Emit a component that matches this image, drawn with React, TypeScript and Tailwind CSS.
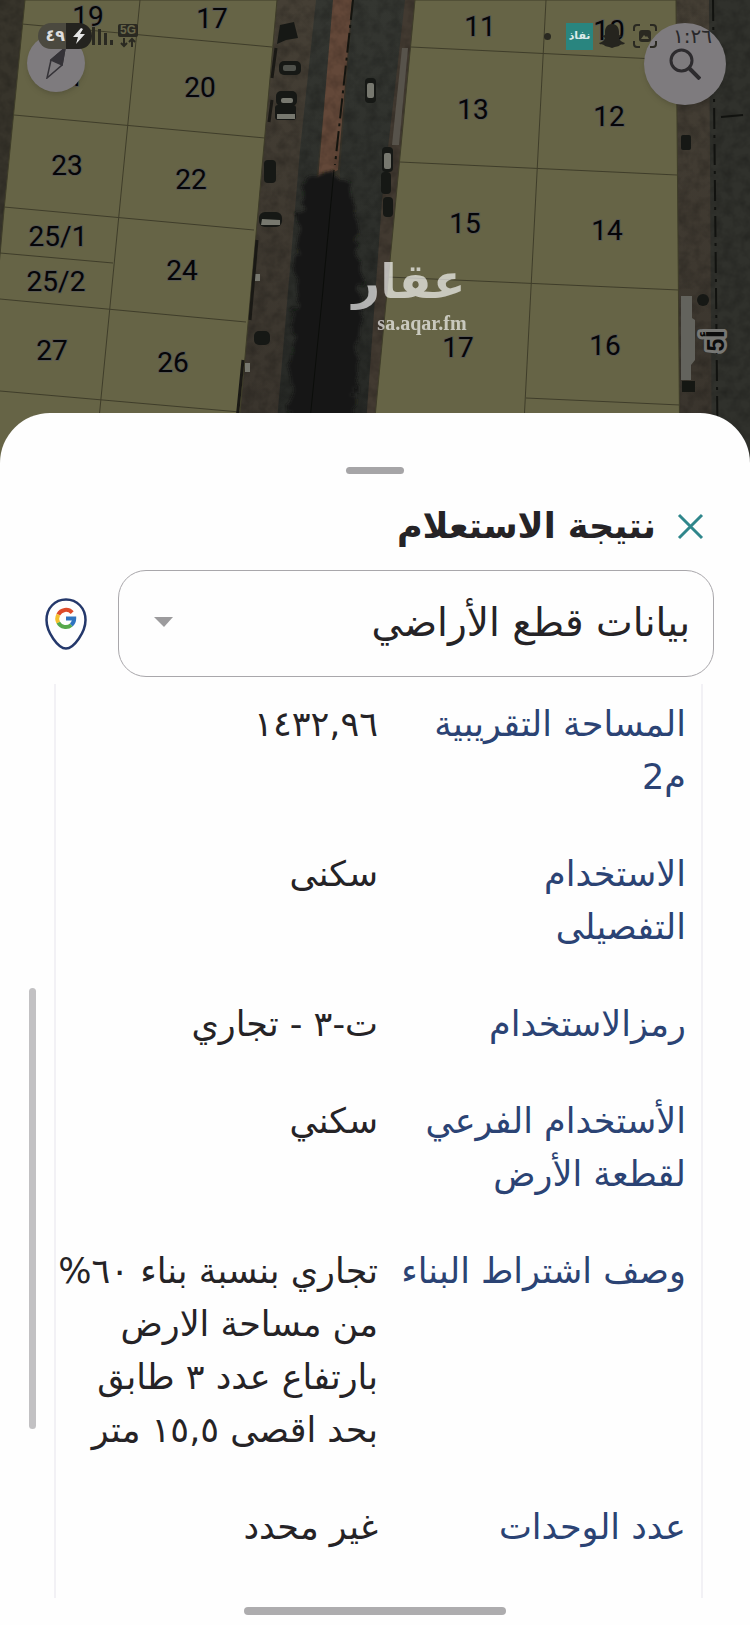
import React, { useState } from 'react'

interface PlotLabel {
  text: string
  x: number
  y: number
}

interface DetailRow {
  label: string
  value: string
}

const plotLabels: PlotLabel[] = [
  { text: '19', x: 88, y: 26 },
  { text: '17', x: 212, y: 28 },
  { text: '21', x: 68, y: 86 },
  { text: '20', x: 200, y: 97 },
  { text: '23', x: 67, y: 175 },
  { text: '22', x: 191, y: 189 },
  { text: '25/1', x: 58, y: 246 },
  { text: '25/2', x: 56, y: 291 },
  { text: '24', x: 182, y: 280 },
  { text: '27', x: 52, y: 360 },
  { text: '26', x: 173, y: 372 },
  { text: '11', x: 480, y: 36 },
  { text: '10', x: 609, y: 40 },
  { text: '13', x: 473, y: 119 },
  { text: '12', x: 609, y: 126 },
  { text: '15', x: 465, y: 233 },
  { text: '14', x: 607, y: 240 },
  { text: '17', x: 458, y: 357 },
  { text: '16', x: 605, y: 355 }
]

const details: DetailRow[] = [
  { label: 'المساحة التقريبية\nم2', value: '١٤٣٢,٩٦' },
  { label: 'الاستخدام\nالتفصيلى', value: 'سكنى' },
  { label: 'رمزالاستخدام', value: 'ت-٣ - تجاري' },
  { label: 'الأستخدام الفرعي\nلقطعة الأرض', value: 'سكني' },
  { label: 'وصف اشتراط البناء', value: 'تجاري بنسبة بناء ٦٠%\nمن مساحة الارض\nبارتفاع عدد ٣ طابق\nبحد اقصى ١٥,٥ متر' },
  { label: 'عدد الوحدات', value: 'غير محدد' }
]

const MapView: React.FC = () => (
  <svg
    className="block h-[480px] w-full bg-[#2c2c28]"
    viewBox="0 0 750 480"
    preserveAspectRatio="xMidYMin slice"
    direction="ltr"
    aria-label="خريطة قطع الأراضي"
  >
    <defs>
      <linearGradient id="street" x1="0" y1="0" x2="0" y2="1">
        <stop offset="0" stopColor="#343631" />
        <stop offset="1" stopColor="#252724" />
      </linearGradient>
      <linearGradient id="verge" x1="0" y1="0" x2="0" y2="1">
        <stop offset="0" stopColor="#453f35" />
        <stop offset="1" stopColor="#38332c" />
      </linearGradient>
      <filter id="ground" x="0" y="0" width="100%" height="100%">
        <feTurbulence type="fractalNoise" baseFrequency="0.09" numOctaves="3" seed="4" />
        <feColorMatrix values="0 0 0 0 0  0 0 0 0 0  0 0 0 0 0  1.4 0 0 0 -0.5" />
      </filter>
      <filter id="leaves" x="-10%" y="-5%" width="120%" height="110%">
        <feTurbulence type="fractalNoise" baseFrequency="0.08" numOctaves="3" seed="9" result="n" />
        <feDisplacementMap in="SourceGraphic" in2="n" scale="16" xChannelSelector="R" yChannelSelector="G" />
        <feGaussianBlur stdDeviation="1.500" />
      </filter>
    </defs>

    {/* Ground and streets */}
    <rect width="750" height="480" fill="#37342b" />
    <path d="M277 0H324L288 480H234Z" fill="url(#verge)" />
    <path d="M316 0H336L316 180L292 480H272L300 150Z" fill="url(#street)" />
    <path d="M333 0H352L338 170L318 180Z" fill="#634839" />
    <path d="M353 0H410L370 480H334L340 170Z" fill="url(#street)" />
    <path d="M405 0H416L374 480H362L382 200Z" fill="#423a31" />
    <path d="M676 0H712V480H680Z" fill="url(#verge)" />
    <path d="M709 0H750V480H712Z" fill="#30312c" />
    <rect width="750" height="480" filter="url(#ground)" opacity="0.28" />
    <path
      d="M308 178L330 172L350 184L356 215L362 300L356 360L354 480H284L296 300L299 215Z"
      fill="#131712"
      filter="url(#leaves)"
    />
    <path d="M353 0L335 165" stroke="#14140f" strokeWidth="2" strokeDasharray="20 5 3 5" fill="none" />
    <path d="M334 170L322 300L310 420" stroke="#0b0d0a" strokeWidth="1" fill="none" />

    {/* Cars along the street */}
    <g fill="#161815">
      <path d="M280 25L294 22L298 38L286 40L277 44Z" />
      <rect x="279" y="61" width="22" height="14" rx="5" />
      <rect x="276" y="91" width="21" height="15" rx="5" />
      <rect x="275" y="105" width="21" height="15" rx="3" />
      <rect x="264" y="160" width="12" height="23" rx="4" />
      <rect x="259" y="212" width="23" height="15" rx="6" />
      <rect x="254" y="331" width="16" height="14" rx="5" />
      <rect x="365" y="78" width="11" height="25" rx="4" />
      <rect x="382" y="147" width="11" height="25" rx="4" />
      <rect x="381" y="172" width="10" height="22" rx="4" />
      <rect x="383" y="197" width="10" height="20" rx="4" />
      <rect x="681" y="135" width="10" height="15" rx="2" />
      <circle cx="703" cy="300" r="6" />
    </g>
    <g fill="#77786f">
      <rect x="283" y="65" width="13" height="6" rx="2" opacity="0.6" />
      <rect x="281" y="98" width="12" height="5" rx="2" />
      <path d="M277 114H295V119H277ZM262 219L280 220V225H261Z" />
      <rect x="367" y="83" width="7" height="15" rx="2" />
      <rect x="384" y="153" width="7" height="16" rx="2" />
      <rect x="253" y="274" width="7" height="7" />
      <rect x="245" y="363" width="5" height="9" />
    </g>
    <path d="M402 48H408L399 145H392Z" fill="#57534b" />
    <path d="M681 296H692V318L695 320V360L691 365V380H681Z" fill="#63635d" />
    <rect x="682" y="381" width="13" height="11" fill="#151713" />

    {/* Plots */}
    <g fill="#666446" stroke="#3e3c29" strokeWidth="1">
      <path d="M25 0H277L234 480H-20L4 210Z" />
      <path d="M415 0H676L680 480H369Z" />
    </g>
    <g fill="none" stroke="#3f3d2a" strokeWidth="1">
      <path d="M140 0L93 480M22 24L272 47M14 115L265 138M4 207L254 230M0 253L113 263M0 299L246 322M0 391L240 412" />
      <path d="M546 0L521 480M411 47L676 60M400 162L677 175M388 277L679 290M526 398L680 405" />
    </g>
    <path d="M276 48L272 78M272 100L269 122M257 240L250 320M243 360L237 420" stroke="#1a1915" strokeWidth="3" />
    <path d="M713 0L718 480" stroke="#11120f" strokeWidth="2" strokeDasharray="21 6 3 6" />
    <path d="M721 117L743 115" stroke="#11120f" strokeWidth="2" />

    {/* Plot numbers */}
    <g
      fontFamily="Roboto, 'Liberation Sans', sans-serif"
      fontSize="28"
      textAnchor="middle"
      fill="#050508"
      stroke="#5a5a52"
      strokeWidth="2"
      paintOrder="stroke"
    >
      {plotLabels.map((plot) => (
        <text key={`${plot.text}-${plot.x}`} x={plot.x} y={plot.y}>
          {plot.text}
        </text>
      ))}
    </g>
    <text
      transform="translate(724 341) rotate(-90)"
      fontFamily="Roboto, 'DejaVu Sans', sans-serif"
      fontSize="24"
      fontWeight="700"
      textAnchor="middle"
      fill="#0c0c0c"
      stroke="#777774"
      strokeWidth="6"
      strokeLinejoin="round"
      paintOrder="stroke"
    >
      5أ
    </text>

    {/* Watermark */}
    <g fill="#ffffff" opacity="0.65">
      <text x="409" y="298" fontFamily="'DejaVu Sans', sans-serif" fontSize="48" fontWeight="700" textAnchor="middle">
        عقار
      </text>
      <text x="422" y="330" fontFamily="'Liberation Serif', serif" fontSize="20" fontWeight="700" textAnchor="middle">
        sa.aqar.fm
      </text>
    </g>
  </svg>
)

const StatusBar: React.FC = () => (
  <div dir="ltr" className="absolute inset-x-0 top-0 flex h-[72px] items-center justify-between px-[38px] text-[#2a2921]">
    <div className="flex items-center">
      <div className="flex h-[26px] w-[54px] overflow-hidden rounded-full">
        <span className="flex w-7 items-center justify-end bg-[#4b493f] pr-px text-base font-bold text-[#dddddd]">٤٩</span>
        <span className="flex flex-1 items-center justify-center bg-[#24231f]">
          <svg className="h-4 w-3" viewBox="0 0 12 16" fill="#e4e4e4">
            <path d="M8 0L0 9H5L3 16L12 6H7L10 1Z" />
          </svg>
        </span>
      </div>
      <svg className="h-[18px] w-[21px]" viewBox="0 0 21 18" fill="currentColor">
        <path d="M0 0h3v18H0zM6 2h3v16H6zM12 6h3v12h-3zM18 13h3v5h-3z" />
      </svg>
      <div className="ml-[5px] flex flex-col items-center">
        <span className="rounded-xs bg-[#2a2921] px-0.5 font-['Liberation_Sans',sans-serif] text-xs leading-[13px] font-bold text-[#68664a]">5G</span>
        <svg className="h-[11px] w-4" viewBox="0 0 16 11" fill="none" stroke="currentColor" strokeWidth="2">
          <path d="M4 1V9M1 6L4 9L7 6M12 10V2M9 5L12 2L15 5" />
        </svg>
      </div>
    </div>
    <div className="flex items-center">
      <span className="size-[7px] rounded-full bg-[#2a2921]" />
      <span dir="rtl" className="ml-[15px] flex size-[27px] items-center justify-center bg-[#29857f] text-[11px] font-bold text-[#dceae9]">
        نفاذ
      </span>
      <svg className="ml-1.5 h-6 w-[26px]" viewBox="0 0 26 24" fill="#25241e">
        <path d="M13 0C8 0 6 4 6 8V11L3 12L6 14C5 17 3 18 0 19C1 21 3 20 5 21C6 23 9 22 13 24C17 22 20 23 21 21C23 20 25 21 26 19C23 18 21 17 20 14L23 12L20 11V8C20 4 18 0 13 0Z" />
      </svg>
      <svg className="ml-2 size-6" viewBox="0 0 24 24" fill="none" stroke="#2a2921" strokeWidth="2">
        <path d="M1 7V4Q1 1 4 1H7M17 1H20Q23 1 23 4V7M23 17V20Q23 23 20 23H17M7 23H4Q1 23 1 20V17" />
        <rect x="6" y="6" width="12" height="12" rx="3" fill="#2a2921" stroke="none" />
        <path d="M8 15L11 11L13 13L14 12L16 15Z" fill="#68664a" stroke="none" />
      </svg>
      <time className="ml-4 text-xl leading-6 text-[#29282a]">١:٢٦</time>
    </div>
  </div>
)

const MapControls: React.FC = () => (
  <div dir="ltr" className="absolute inset-x-0 top-[23px] flex items-start justify-between pr-6 pl-[27px]">
    <button
      type="button"
      aria-label="البوصلة"
      className="mt-[11px] flex size-[58px] items-center justify-center rounded-full bg-[#7e7b7e] shadow-md"
    >
      <svg className="h-8 w-5" viewBox="0 0 20 32" fill="none" stroke="#353338" strokeWidth="1.5">
        <path d="M19 1L5 13L1 31L16 18Z" />
        <path d="M19 1L5 13L16 18Z" fill="#353338" />
      </svg>
    </button>
    <button
      type="button"
      aria-label="بحث"
      className="flex size-[82px] items-center justify-center rounded-full bg-[#7e7b7e] shadow-md"
    >
      <svg className="size-8" viewBox="0 0 32 32" fill="none" stroke="#2d2b2e" strokeWidth="3">
        <circle cx="12.500" cy="12.500" r="10.500" />
        <path d="M20 20L31 31" strokeWidth="4" />
      </svg>
    </button>
  </div>
)

const GooglePin: React.FC = () => (
  <svg className="h-[52px] w-[42px]" viewBox="0 0 42 52" fill="none">
    <path
      d="M21 1.500C10 1.500 1.500 10 1.500 22C1.500 34 13 50.500 21 50.500C29 50.500 40.500 34 40.500 22C40.500 10 32 1.500 21 1.500Z"
      stroke="#24386b"
      strokeWidth="2.500"
    />
    <g strokeWidth="4">
      <path d="M27.200 14.600A8.500 8.500 0 0 0 13.300 16.600" stroke="#dd4b2b" />
      <path d="M13.300 16.600A8.500 8.500 0 0 0 13.300 24.600" stroke="#f5c02c" />
      <path d="M13.300 24.600A8.500 8.500 0 0 0 26.300 27" stroke="#56a84c" />
      <path d="M26.300 27A8.500 8.500 0 0 0 29.200 20.600H21" stroke="#2f74c0" />
    </g>
  </svg>
)

export default function App() {
  const [layer, setLayer] = useState('parcels')

  return (
    <div dir="rtl" className="min-h-screen bg-white font-['DejaVu_Sans',sans-serif] text-[#252326]">
      <div className="relative">
        <MapView />
        <MapControls />
        <StatusBar />
      </div>

      <main className="relative -mt-[67px] flex flex-col rounded-t-[50px] bg-[#fefefe] pb-[10px]">
        <div className="mx-auto mt-[54px] h-[7px] w-[58px] rounded-full bg-[#a6a5a7]" />

        {/* Sheet title */}
        <header className="mt-[26px] flex h-[52px] items-center gap-[21px] pr-[46px]">
          <button type="button" aria-label="إغلاق" className="text-[#2f868b]">
            <svg className="size-[27px]" viewBox="0 0 27 27" fill="none" stroke="currentColor" strokeWidth="3">
              <path d="M2 2L25 25M25 2L2 25" />
            </svg>
          </button>
          <h1 className="text-[35px] leading-[52px] font-bold">نتيجة الاستعلام</h1>
        </header>

        {/* Layer picker */}
        <div className="mt-[18px] flex items-center gap-[31px] pr-9 pl-[45px]">
          <div className="relative flex-1">
            <select
              aria-label="الطبقة"
              value={layer}
              onChange={(e) => setLayer(e.target.value)}
              className="block h-[107px] w-full appearance-none rounded-[28px] border border-[#a9a7ab] bg-transparent px-[23px] text-[39px]"
            >
              <option value="parcels">بيانات قطع الأراضي</option>
            </select>
            <svg className="pointer-events-none absolute top-[47px] left-9 h-[10px] w-[19px]" viewBox="0 0 19 10" fill="#9c9b9d">
              <path d="M0 0H19L10 10Z" />
            </svg>
          </div>
          <button type="button" aria-label="خرائط جوجل">
            <GooglePin />
          </button>
        </div>

        {/* Parcel details */}
        <section className="relative mt-[7px] pr-[47px] pl-[54px]">
          <div className="border-x-2 border-[#f2f1f5] pt-[14px] pr-[15px]">
            <table className="w-full table-fixed text-right text-[35px] leading-[53px]">
              <tbody>
                {details.map((row) => (
                  <tr key={row.label} className="align-top">
                    <th scope="row" className="w-[308px] pb-11 font-normal whitespace-pre text-[#2b4374]">
                      {row.label}
                    </th>
                    <td className="pb-11 whitespace-pre">{row.value}</td>
                  </tr>
                ))}
              </tbody>
            </table>
          </div>
          <div className="absolute top-[304px] left-[29px] h-[441px] w-[7px] rounded-full bg-[#c2c1c3]" />
        </section>

        <div className="mx-auto mt-[9px] h-2 w-[262px] rounded-full bg-[#adacae]" />
      </main>
    </div>
  )
}
